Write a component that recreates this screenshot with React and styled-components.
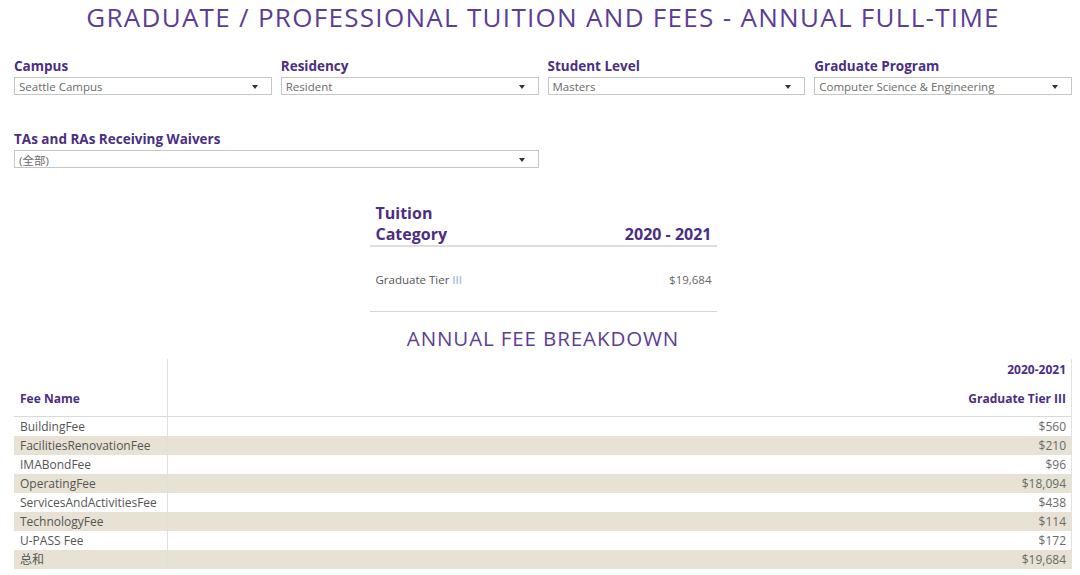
import React from 'react';
import styled, { createGlobalStyle } from 'styled-components';

const GlobalStyle = createGlobalStyle`
  html, body {
    margin: 0;
    padding: 0;
    background: #ffffff;
  }
  body {
    font-family: "Open Sans", "Noto Sans CJK SC", sans-serif;
  }
`;

const purple = '#4b2e83';

const Page = styled.div`
  width: 1080px;
  height: 575px;
  overflow: hidden;
  box-sizing: border-box;
  padding: 0 8px 0 14px;
`;

const Title = styled.h1`
  margin: 0;
  padding-top: 1px;
  height: 44px;
  text-align: center;
  font-family: "Open Sans", sans-serif;
  font-weight: 400;
  font-size: 26px;
  line-height: 32px;
  color: #5b3d96;
  letter-spacing: 1.3px;
`;

const FilterGrid = styled.div`
  display: grid;
  grid-template-columns: repeat(4, 1fr);
  column-gap: 9px;
  row-gap: 35px;
  margin-top: 12px;
`;

const Filter = styled.div`
  grid-column: span ${(p) => p.$span || 1};
  display: flex;
  flex-direction: column;
`;

const FilterLabel = styled.div`
  font-family: "Open Sans", sans-serif;
  font-weight: 700;
  font-size: 13.5px;
  line-height: 18px;
  color: ${purple};
  height: 18px;
  margin-bottom: 2px;
`;

const Select = styled.div`
  display: flex;
  align-items: center;
  justify-content: space-between;
  height: 18px;
  box-sizing: border-box;
  border: 1px solid #c6c6c6;
  padding: 1px 13px 0 4px;
  font-family: "Open Sans", "Noto Sans CJK SC", sans-serif;
  font-size: 11.5px;
  color: #6a6a6a;
`;

// small caret drawn with borders, as in the Tableau quick filter
const Caret = styled.span`
  width: 0;
  height: 0;
  border-left: 3px solid transparent;
  border-right: 3px solid transparent;
  border-top: 4px solid #333;
`;

const TuitionTable = styled.div`
  width: 347px;
  margin: 35px auto 0;
`;

const TuitionHead = styled.div`
  display: flex;
  justify-content: space-between;
  align-items: flex-end;
  padding: 0 5px 0 6px;
  border-bottom: 2px solid #dedede;
  font-family: "Open Sans", sans-serif;
  font-weight: 700;
  font-size: 16px;
  line-height: 21px;
  color: ${purple};
`;

const TuitionRow = styled.div`
  display: flex;
  justify-content: space-between;
  align-items: center;
  height: 64px;
  padding: 0 5px 0 6px;
  border-bottom: 1px solid #d6d6d6;
  font-family: "Open Sans", sans-serif;
  font-size: 11.5px;
  color: #555;
`;

const Roman = styled.span`
  color: #8aa6d6;
`;

const Amount = styled.span`
  color: #666;
`;

const SectionTitle = styled.h2`
  margin: 13px 0 0;
  text-align: center;
  font-family: "Open Sans", sans-serif;
  font-weight: 400;
  font-size: 20.5px;
  line-height: 26px;
  letter-spacing: 0.9px;
  color: #5b3d96;
`;

const FeeTable = styled.div`
  display: grid;
  grid-template-columns: 154px 1fr;
  margin-top: 8px;
  border-right: 1px solid #e2e2e2;
  font-family: "Open Sans", "Noto Sans CJK SC", sans-serif;
`;

const HeadCell = styled.div`
  display: flex;
  flex-direction: column;
  justify-content: flex-end;
  align-items: ${(p) => (p.$right ? 'flex-end' : 'flex-start')};
  height: 58px;
  box-sizing: border-box;
  padding: 0 5px 10px 6px;
  border-bottom: 1px solid #d9d9d9;
  border-right: ${(p) => (p.$divider ? '1px solid #e0e0e0' : 'none')};
  font-weight: 700;
  font-size: 12px;
  line-height: 14px;
  color: ${purple};
`;

const HeadTop = styled.div`
  margin-bottom: 15px;
`;

const Cell = styled.div`
  height: 19px;
  line-height: 19px;
  padding: 0 5px 0 6px;
  background: ${(p) => (p.$band ? '#e7e2d3' : '#ffffff')};
  border-right: ${(p) => (p.$divider ? '1px solid #e0e0e0' : 'none')};
  text-align: ${(p) => (p.$right ? 'right' : 'left')};
  font-size: 12px;
  color: ${(p) => (p.$right ? '#6a6a6a' : '#555')};
  white-space: nowrap;
`;

const filters = [
  { label: 'Campus', value: 'Seattle Campus' },
  { label: 'Residency', value: 'Resident' },
  { label: 'Student Level', value: 'Masters' },
  { label: 'Graduate Program', value: 'Computer Science & Engineering' },
  { label: 'TAs and RAs Receiving Waivers', value: '(全部)', span: 2 },
];

const fees = [
  ['BuildingFee', '$560'],
  ['FacilitiesRenovationFee', '$210'],
  ['IMABondFee', '$96'],
  ['OperatingFee', '$18,094'],
  ['ServicesAndActivitiesFee', '$438'],
  ['TechnologyFee', '$114'],
  ['U-PASS Fee', '$172'],
  ['总和', '$19,684'],
];

const App = () => (
  <Page>
    <GlobalStyle />
    <Title>GRADUATE / PROFESSIONAL TUITION AND FEES - ANNUAL FULL-TIME</Title>

    <FilterGrid>
      {filters.map((f) => (
        <Filter key={f.label} $span={f.span}>
          <FilterLabel>{f.label}</FilterLabel>
          <Select>
            <span>{f.value}</span>
            <Caret />
          </Select>
        </Filter>
      ))}
    </FilterGrid>

    <TuitionTable>
      <TuitionHead>
        <span>
          Tuition
          <br />
          Category
        </span>
        <span>2020 - 2021</span>
      </TuitionHead>
      <TuitionRow>
        <span>
          Graduate Tier <Roman>III</Roman>
        </span>
        <Amount>$19,684</Amount>
      </TuitionRow>
    </TuitionTable>

    <SectionTitle>ANNUAL FEE BREAKDOWN</SectionTitle>

    <FeeTable>
      <HeadCell $divider>Fee Name</HeadCell>
      <HeadCell $right>
        <HeadTop>2020-2021</HeadTop>
        Graduate Tier III
      </HeadCell>
      {fees.map(([name, amount], i) => (
        <React.Fragment key={name}>
          <Cell $band={i % 2 === 1} $divider>
            {name}
          </Cell>
          <Cell $band={i % 2 === 1} $right>
            {amount}
          </Cell>
        </React.Fragment>
      ))}
    </FeeTable>
  </Page>
);

export default App;
